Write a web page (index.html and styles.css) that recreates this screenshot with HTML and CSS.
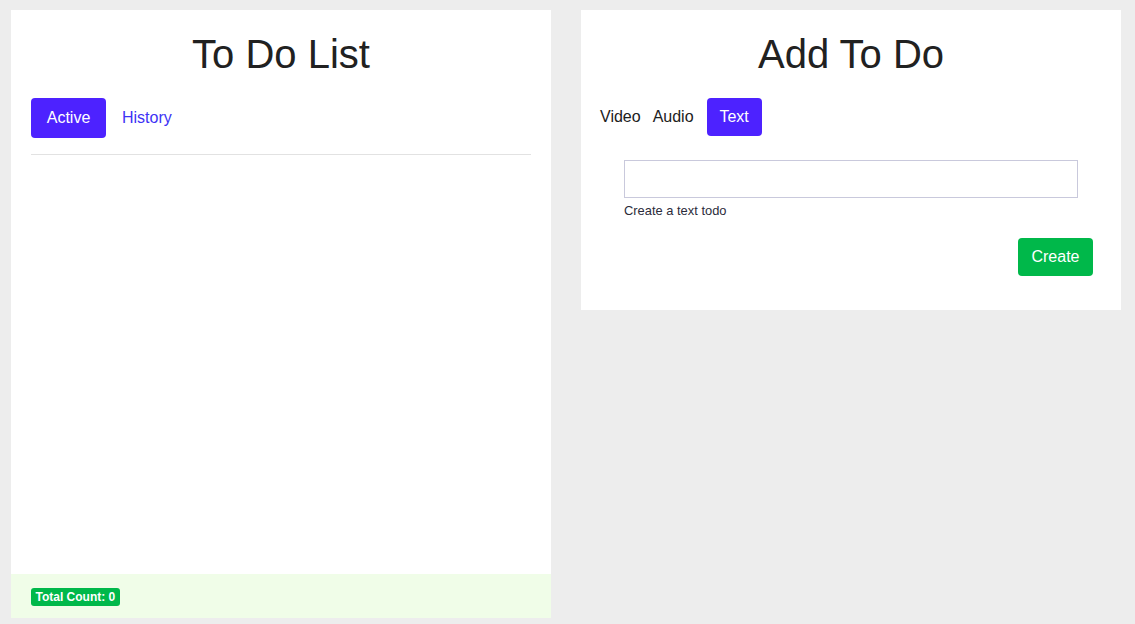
FILE: index.html
```html
<!DOCTYPE html>
<html>
<head>
<meta charset="utf-8">
<link rel="stylesheet" href="styles.css">
</head>
<body>
<div class="page">
  <section class="card list-card">
    <h1 class="title">To Do List</h1>
    <div class="tabs">
      <button class="tab tab-active">Active</button>
      <button class="tab tab-link">History</button>
    </div>
    <div class="divider"></div>
    <div class="list"></div>
    <footer class="footer">
      <span class="badge">Total Count: 0</span>
    </footer>
  </section>
  <section class="card add-card">
    <h1 class="title">Add To Do</h1>
    <div class="tabs tabs-small">
      <button class="tab tab-plain">Video</button>
      <button class="tab tab-plain tab-gap">Audio</button>
      <button class="tab tab-active tab-sm">Text</button>
    </div>
    <div class="form">
      <input class="input" type="text">
      <div class="hint">Create a text todo</div>
    </div>
    <div class="actions">
      <button class="btn-create">Create</button>
    </div>
  </section>
</div>
</body>
</html>
```

FILE: styles.css
```css
* { box-sizing: border-box; }
html, body { margin: 0; padding: 0; background: #ededed; }
body { font-family: "Liberation Sans", Arial, sans-serif; color: #212121; }
.page {
  display: flex;
  align-items: flex-start;
  gap: 30px;
  padding: 10px 11px;
}
.card {
  width: 540px;
  background: #fff;
  display: flex;
  flex-direction: column;
}
.list-card { height: 608px; }
.title {
  margin: 0;
  padding-top: 21px;
  font-size: 40px;
  font-weight: 400;
  line-height: 46px;
  text-align: center;
  color: #212121;
}
.tabs {
  display: flex;
  align-items: center;
  padding: 21px 20px 0;
}
.tab {
  font-family: "Liberation Sans", Arial, sans-serif;
  font-size: 16px;
  border: none;
  background: none;
  cursor: pointer;
  margin: 0;
}
.tab-active {
  background: #4d22ff;
  color: #fff;
  height: 40px;
  width: 75px;
  padding: 0;
  border-radius: 4px;
}
.tab-link {
  color: #3d33f5;
  height: 40px;
  padding: 0 16px;
}
.tabs-small { padding-left: 19px; }
.tab-plain {
  color: #212121;
  padding: 0;
  height: 38px;
  margin-right: 12px;
}
.tab-gap { margin-right: 13px; }
.tab-sm { height: 38px; width: 55px; }
.divider {
  margin: 16px 20px 0;
  border-top: 1px solid #e2e2e2;
}
.list { flex: 1; }
.footer {
  height: 44px;
  background: #f0fde8;
  display: flex;
  align-items: center;
  padding: 2px 20px 0;
}
.badge {
  background: #00b84a;
  color: #fff;
  font-weight: 700;
  font-size: 12px;
  line-height: 18px;
  padding: 0 4.5px;
  border-radius: 3px;
}
.form {
  padding: 24px 43px 0;
}
.input {
  display: block;
  width: 100%;
  height: 38px;
  border: 1px solid #c9c9dc;
  border-radius: 0;
  font-size: 16px;
  outline: none;
}
.hint {
  margin-top: 5px;
  font-size: 12.9px;
  line-height: 15px;
  color: #2b2b3a;
}
.actions {
  display: flex;
  justify-content: flex-end;
  padding: 20px 28px 34px;
}
.btn-create {
  background: #00b84a;
  color: #fff;
  border: none;
  border-radius: 4px;
  font-family: "Liberation Sans", Arial, sans-serif;
  font-size: 16px;
  height: 38px;
  width: 75px;
  padding: 0;
  cursor: pointer;
}
```
